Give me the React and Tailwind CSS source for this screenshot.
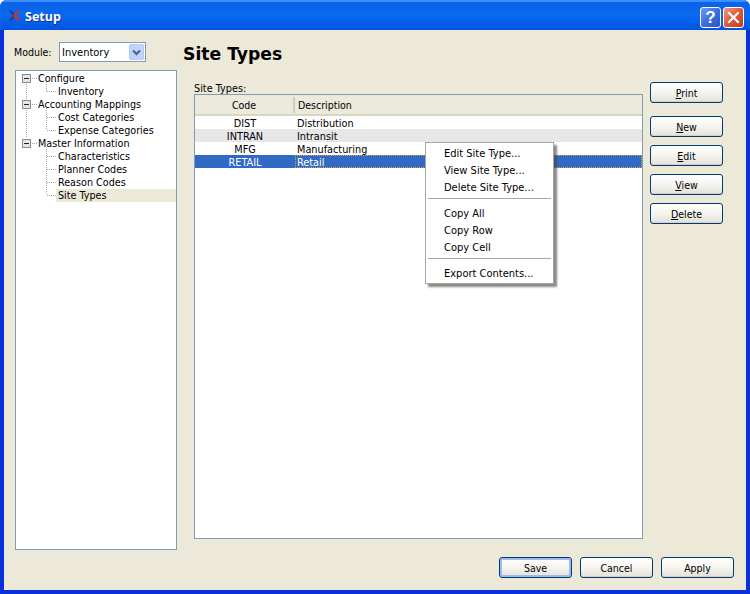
const treeRows = [
  { label: "Configure", root: true },
  { label: "Inventory" },
  { label: "Accounting Mappings", root: true },
  { label: "Cost Categories" },
  { label: "Expense Categories" },
  { label: "Master Information", root: true },
  { label: "Characteristics" },
  { label: "Planner Codes" },
  { label: "Reason Codes" },
  { label: "Site Types", selected: true },
];

const tableRows = [
  { code: "DIST", description: "Distribution", bg: "bg-white text-black" },
  { code: "INTRAN", description: "Intransit", bg: "bg-[#e7e7e7] text-black" },
  { code: "MFG", description: "Manufacturing", bg: "bg-white text-black" },
  { code: "RETAIL", description: "Retail", bg: "bg-[#316ac5] text-white", active: true },
];

function Btn({ children, main }) {
  return (
    <button className={`w-[73px] h-[21px] rounded-[3px] border border-[#003c74] pt-px text-[10.5px] leading-[18px] text-black bg-gradient-to-b from-white via-[#f5f4ef] to-[#e3e1d8] ${main ? "shadow-[inset_0_0_0_2px_#9fbbeb]" : "shadow-[inset_0_-1px_0_#d6d0c5]"}`}>
      {children}
    </button>
  );
}

function Accel({ first, rest }) {
  return (
    <span>
      <span className="underline">{first}</span>
      {rest}
    </span>
  );
}

function TreeLines() {
  const dot = "#aca899";
  const dash = { stroke: dot, strokeWidth: 1, strokeDasharray: "1 1", fill: "none" };
  const roots = [7, 33, 72];
  const kids = [20, 46, 59, 85, 98, 111, 124];
  return (
    <svg className="absolute left-0 top-0" width="60" height="140">
      <path d="M10.5 11V66" {...dash} />
      <path d="M30.5 11V20M30.5 37V59M30.5 76V124" {...dash} />
      {kids.map((y) => (
        <path key={y} d={`M31 ${y + 0.5}H40`} {...dash} />
      ))}
      {roots.map((y) => (
        <g key={y}>
          <path d={`M16 ${y + 0.5}H21`} {...dash} />
          <rect x="6.5" y={y - 4 + 0.5} width="8" height="8" fill="#e9e7dc" stroke="#7f8e9d" />
          <path d={`M8 ${y + 0.5}H13`} stroke="#222" />
        </g>
      ))}
    </svg>
  );
}

function ContextMenu() {
  const Item = ({ children }) => <div className="h-[17px] leading-[17px] pl-[18px]">{children}</div>;
  const Sep = () => <div className="h-px bg-[#aca899] mx-[2px] mt-[2px] mb-[6px]" />;
  return (
    <div className="absolute left-[242px] top-[62px] w-[129px] h-[142px] bg-white border border-[#aca899] pt-[2px] text-[11px] text-black shadow-[3px_3px_2px_rgba(70,70,70,0.65)]">
      <Item>Edit Site Type...</Item>
      <Item>View Site Type...</Item>
      <Item>Delete Site Type...</Item>
      <Sep />
      <Item>Copy All</Item>
      <Item>Copy Row</Item>
      <Item>Copy Cell</Item>
      <Sep />
      <Item>Export Contents...</Item>
    </div>
  );
}

export default function App() {
  return (
    <div className="w-[750px] h-[594px] flex flex-col overflow-hidden rounded-t-[7px] bg-[#0831d9] font-['DejaVu_Sans_Condensed','DejaVu_Sans',sans-serif] text-[10.5px] text-black">
      <div className="h-[30px] shrink-0 flex items-center pl-[8px] pr-[6px] pt-[4px] bg-gradient-to-b from-[#0a5fe8] via-[#0a6af0] to-[#0353e0] shadow-[inset_0_2px_1px_#3d93ff]">
        <svg width="13" height="11" viewBox="0 0 14 12" className="mr-[4px] mt-[-3px]">
          <path d="M0 0H4L7 4L5 6Z" fill="#1f3fa8" />
          <path d="M0 12L6 5L8 7L4 12Z" fill="#2b3f9c" />
          <path d="M14 1L8 6L14 11H10L5 6L10 1Z" fill="#d8301c" />
        </svg>
        <span className="font-['Open_Sans',sans-serif] font-bold text-[12.5px] text-white [text-shadow:1px_1px_0_#0f2f9a] pt-px">Setup</span>
        <div className="ml-auto flex gap-[2px]">
          <div className="w-[21px] h-[21px] rounded-[3px] border border-white bg-gradient-to-br from-[#6f9bf5] via-[#3c6fe0] to-[#2a52c4] flex items-center justify-center font-['Liberation_Sans',sans-serif] font-bold text-[17px] leading-none text-white">?</div>
          <div className="w-[21px] h-[21px] rounded-[3px] border border-white bg-gradient-to-br from-[#ec9a80] via-[#dc5a34] to-[#c23a16] flex items-center justify-center">
            <svg width="13" height="13" viewBox="0 0 13 13">
              <path d="M2 2L11 11M11 2L2 11" stroke="#fff" strokeWidth="2.2" strokeLinecap="square" />
            </svg>
          </div>
        </div>
      </div>

      <div className="flex-1 min-h-0 mx-[4px] mb-[4px] bg-[#ece9d8] flex flex-col">
        <div className="flex-1 min-h-0 flex pt-[12px] pl-[10px] pr-[23px]">
          <div className="w-[163px] shrink-0 flex flex-col">
            <div className="flex items-center h-[20px]">
              <span className="w-[45px] pt-px">Module:</span>
              <div className="w-[87px] h-[20px] border border-[#7f9db9] bg-white flex items-center pl-[2px] pr-px text-[11px]">
                <span className="pt-[2px]">Inventory</span>
                <div className="ml-auto w-[15px] h-[16px] rounded-[2px] bg-[#c1d3fb] border border-[#b5c9f5] flex items-center justify-center">
                  <svg width="9" height="7" viewBox="0 0 9 7">
                    <path d="M1 1.5L4.5 5L8 1.5" stroke="#4d6185" strokeWidth="2" fill="none" />
                  </svg>
                </div>
              </div>
            </div>
            <div className="relative mt-[8px] ml-px h-[480px] border border-[#7f9db9] bg-white pt-px text-[10.7px]">
              <TreeLines />
              {treeRows.map((r) => (
                <div key={r.label} className="h-[13px] leading-[13px] flex">
                  <div className={r.root ? "w-[20px] shrink-0" : "w-[40px] shrink-0"} />
                  <div className={`flex-1 pl-[2px] ${r.selected ? "bg-[#ece9d8]" : ""}`}>{r.label}</div>
                </div>
              ))}
            </div>
          </div>

          <div className="flex-1 min-w-0 pl-[6px] flex flex-col">
            <div className="h-[20px] mt-[2px] font-bold text-[17.2px] leading-[20px] font-['DejaVu_Sans',sans-serif]">Site Types</div>
            <div className="flex flex-1 min-h-0 mt-[16px] pl-[11px] gap-[7px] relative">
              <div className="w-[449px] flex flex-col mt-[2px]">
                <div className="h-[13px] leading-[13px] text-[10.8px]">Site Types:</div>
                <div className="relative h-[445px] border border-[#7f9db9] bg-white mt-[-1px]">
                  <div className="h-[21px] flex bg-[#ebeadb] shadow-[inset_0_-2px_0_#d8d5c5]">
                    <div className="w-[98px] text-center leading-[20px]">Code</div>
                    <div className="flex-1 pl-[3px] border-l-2 border-[#d0cdbd] mt-[2px] h-[16px] leading-[16px]">Description</div>
                  </div>
                  {tableRows.map((r) => (
                    <div key={r.code} className={`h-[13px] leading-[15px] flex text-[10.8px] ${r.bg}`}>
                      <div className="w-[100px] text-center">{r.code}</div>
                      <div className={`flex-1 pl-[2px] ${r.active ? "outline-1 outline-dotted outline-offset-[-1px] outline-[#e0a040]" : ""}`}>{r.description}</div>
                    </div>
                  ))}
                </div>
              </div>
              <ContextMenu />
              <div className="w-[73px] flex flex-col mt-[2px]">
                <Btn><Accel first="P" rest="rint" /></Btn>
                <div className="h-[13px]" />
                <div className="flex flex-col gap-[8px]">
                  <Btn><Accel first="N" rest="ew" /></Btn>
                  <Btn><Accel first="E" rest="dit" /></Btn>
                  <Btn><Accel first="V" rest="iew" /></Btn>
                  <Btn><Accel first="D" rest="elete" /></Btn>
                </div>
              </div>
            </div>
          </div>
        </div>
        <div className="flex justify-end gap-[8px] pr-[12px] pb-[12px]">
          <Btn main>Save</Btn>
          <Btn>Cancel</Btn>
          <Btn>Apply</Btn>
        </div>
      </div>
    </div>
  );
}
